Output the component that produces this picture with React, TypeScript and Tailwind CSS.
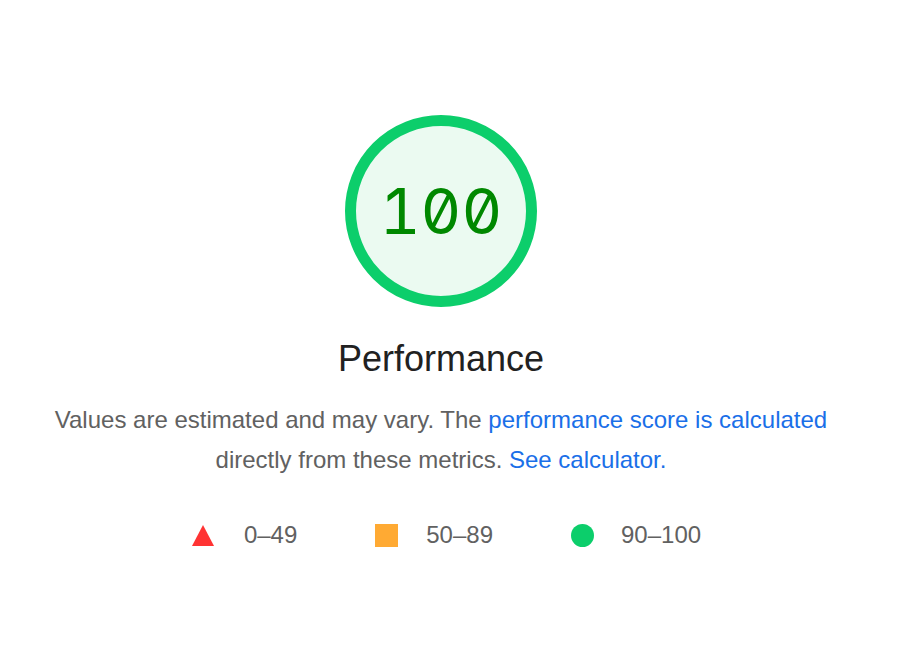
export default function App() {
  return (
    <main className="flex min-h-[667px] w-full flex-col items-center bg-white pt-[115px] pr-[18px] font-['Liberation_Sans',Arial,Helvetica,sans-serif]">
      {/* score gauge */}
      <div className="flex h-[192px] w-[192px] items-center justify-center rounded-full border-[11px] border-[#0cce6b] bg-[#ebfaf1]">
        <span className="font-['Inter',sans-serif] text-[63px] leading-none font-normal text-[#008800] [font-feature-settings:'zero','tnum']">
          100
        </span>
      </div>

      <h1 className="mt-[30px] text-[36px] leading-[44px] text-[#212121]">Performance</h1>

      <p className="mt-[19px] max-w-[800px] text-center text-[24px] leading-[40px] text-[#616161]">
        Values are estimated and may vary. The{" "}
        <a className="text-[#1a6fe8]">performance score is calculated</a> directly from these
        metrics. <a className="text-[#1a6fe8]">See calculator.</a>
      </p>

      <div className="mt-[41px] ml-[11px] flex items-center gap-[78px] text-[24px] leading-[28px] text-[#616161]">
        <div className="flex items-center gap-[30px]">
          <svg width="22" height="22" viewBox="0 0 22 22">
            <polygon points="11,1 22,22 0,22" fill="#ff3333" />
          </svg>
          <span>0–49</span>
        </div>
        <div className="flex items-center gap-[28px]">
          <div className="h-[23px] w-[23px] bg-[#ffaa33]" />
          <span>50–89</span>
        </div>
        <div className="flex items-center gap-[27px]">
          <div className="h-[23px] w-[23px] rounded-full bg-[#0cce6b]" />
          <span>90–100</span>
        </div>
      </div>
    </main>
  );
}
